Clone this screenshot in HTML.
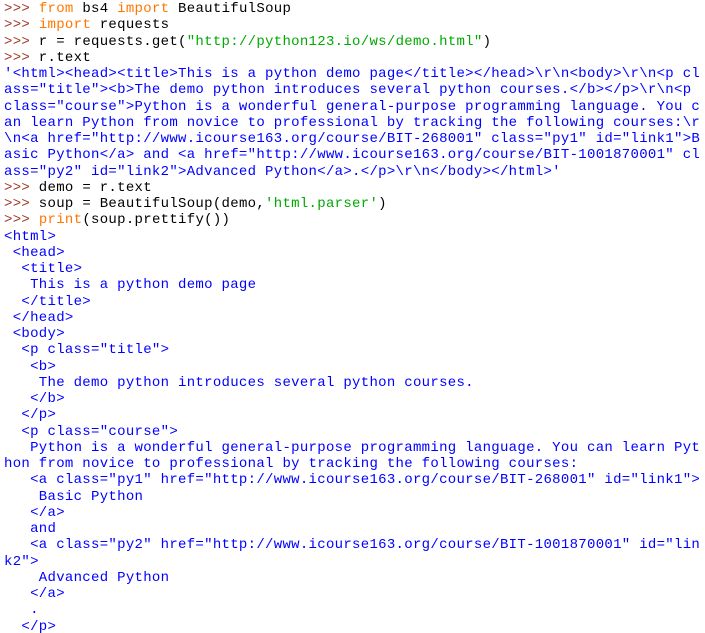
<!DOCTYPE html>
<html><head><meta charset="utf-8"><style>
html,body{margin:0;padding:0;background:#fff;width:705px;height:633px;overflow:hidden}
pre{margin:0;padding:1px 0 0 4px;font-family:"Liberation Mono",monospace;font-size:14px;letter-spacing:0.3px;line-height:16.25px;color:#000;white-space:pre}
.p{color:#a0392b}.k{color:#ff7700}.s{color:#00aa00}.o{color:#0000ff}
</style></head><body><pre><span class="p">&gt;&gt;&gt;</span> <span class="k">from</span> bs4 <span class="k">import</span> BeautifulSoup
<span class="p">&gt;&gt;&gt;</span> <span class="k">import</span> requests
<span class="p">&gt;&gt;&gt;</span> r = requests.get(<span class="s">"http://python123.io/ws/demo.html"</span>)
<span class="p">&gt;&gt;&gt;</span> r.text
<span class="o">'&lt;html&gt;&lt;head&gt;&lt;title&gt;This is a python demo page&lt;/title&gt;&lt;/head&gt;\r\n&lt;body&gt;\r\n&lt;p cl
ass="title"&gt;&lt;b&gt;The demo python introduces several python courses.&lt;/b&gt;&lt;/p&gt;\r\n&lt;p 
class="course"&gt;Python is a wonderful general-purpose programming language. You c
an learn Python from novice to professional by tracking the following courses:\r
\n&lt;a href="http://www.icourse163.org/course/BIT-268001" class="py1" id="link1"&gt;B
asic Python&lt;/a&gt; and &lt;a href="http://www.icourse163.org/course/BIT-1001870001" cl
ass="py2" id="link2"&gt;Advanced Python&lt;/a&gt;.&lt;/p&gt;\r\n&lt;/body&gt;&lt;/html&gt;'</span>
<span class="p">&gt;&gt;&gt;</span> demo = r.text
<span class="p">&gt;&gt;&gt;</span> soup = BeautifulSoup(demo,<span class="s">'html.parser'</span>)
<span class="p">&gt;&gt;&gt;</span> <span class="k">print</span>(soup.prettify())
<span class="o">&lt;html&gt;
 &lt;head&gt;
  &lt;title&gt;
   This is a python demo page
  &lt;/title&gt;
 &lt;/head&gt;
 &lt;body&gt;
  &lt;p class="title"&gt;
   &lt;b&gt;
    The demo python introduces several python courses.
   &lt;/b&gt;
  &lt;/p&gt;
  &lt;p class="course"&gt;
   Python is a wonderful general-purpose programming language. You can learn Pyt
hon from novice to professional by tracking the following courses:
   &lt;a class="py1" href="http://www.icourse163.org/course/BIT-268001" id="link1"&gt;
    Basic Python
   &lt;/a&gt;
   and
   &lt;a class="py2" href="http://www.icourse163.org/course/BIT-1001870001" id="lin
k2"&gt;
    Advanced Python
   &lt;/a&gt;
   .
  &lt;/p&gt;</span></pre></body></html>
